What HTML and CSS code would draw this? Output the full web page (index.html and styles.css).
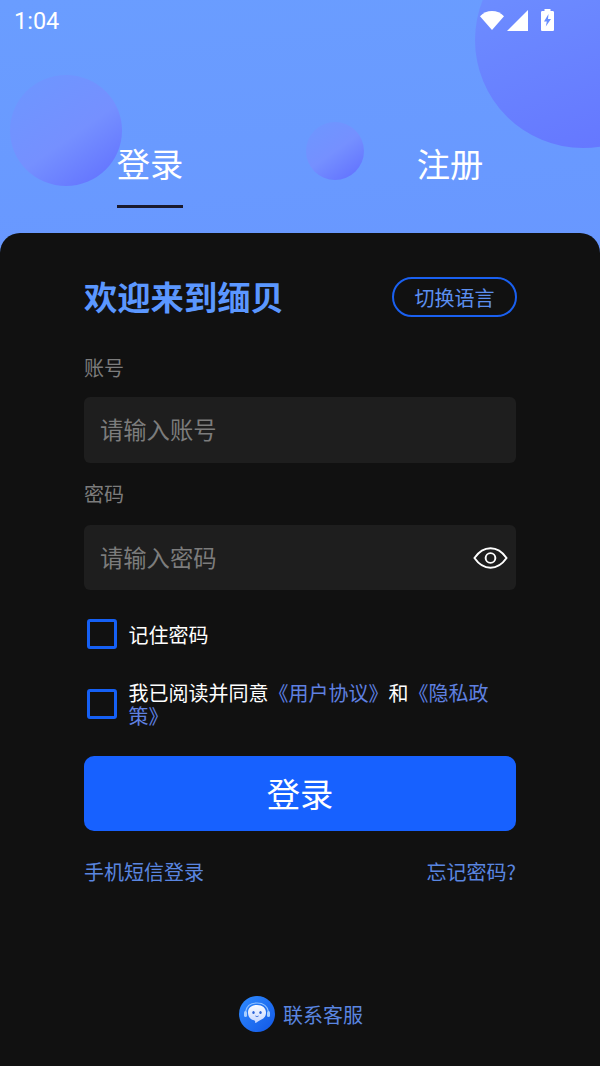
FILE: index.html
```html
<!DOCTYPE html>
<html lang="zh-CN">
<head>
    <meta charset="UTF-8">
    <title>登录</title>
    <link rel="stylesheet" href="styles.css">
</head>
<body>
    <div class="page">
        <div class="hero">
            <div class="bubble bubble-big"></div>
            <div class="bubble bubble-left"></div>
            <div class="bubble bubble-mid"></div>

            <div class="status-bar">
                <span class="time">1:04</span>
                <div class="status-icons">
                    <svg class="icon-wifi" width="24" height="20" viewBox="0 0 24 20">
                        <path d="M0 6.200C3.200 2.800 7.400 1 12 1s8.800 1.800 12 5.200L12 20z" fill="#fff"/>
                    </svg>
                    <svg class="icon-signal" width="21" height="21" viewBox="0 0 21 21">
                        <path d="M0 21L21 0v21z" fill="#fff"/>
                    </svg>
                    <svg class="icon-battery" width="13" height="22" viewBox="0 0 13 22">
                        <path d="M3.500 0h6v2h2.200c.7 0 1.300.6 1.300 1.300v17.400c0 .7-.6 1.300-1.300 1.300H1.300C.6 22 0 21.400 0 20.700V3.300C0 2.600.6 2 1.300 2h2.200z" fill="#fff"/>
                        <path d="M7.500 5L3 12.500h2.800l-1 5L10 10H7z" fill="#6a8fff"/>
                    </svg>
                </div>
            </div>

            <div class="tabs">
                <div class="tab active"><span>登录</span></div>
                <div class="tab"><span>注册</span></div>
            </div>
        </div>

        <div class="sheet">
            <div class="title-row">
                <h1>欢迎来到缅贝</h1>
                <button class="lang-button">切换语言</button>
            </div>

            <label class="field-label" for="account">账号</label>
            <div class="field">
                <input type="text" id="account" placeholder="请输入账号">
            </div>

            <label class="field-label" for="password">密码</label>
            <div class="field">
                <input type="password" id="password" placeholder="请输入密码">
                <svg class="icon-eye" width="35" height="24" viewBox="0 0 36 24" fill="none" stroke="#fff" stroke-width="2">
                    <path d="M1.500 12C6 5.500 11.500 2 18 2s12 3.500 16.500 10C30 18.500 24.500 22 18 22S6 18.500 1.500 12z"/>
                    <circle cx="18" cy="12" r="5"/>
                </svg>
            </div>

            <div class="check-row remember">
                <span class="checkbox"></span>
                <span class="check-text">记住密码</span>
            </div>

            <div class="check-row agree">
                <span class="checkbox"></span>
                <span class="check-text">我已阅读并同意<a href="#">《用户协议》</a>和<a href="#">《隐私政策》</a></span>
            </div>

            <button class="login-button">登录</button>

            <div class="links">
                <a href="#">手机短信登录</a>
                <a href="#">忘记密码?</a>
            </div>

            <div class="support">
                <svg class="support-icon" width="36" height="36" viewBox="0 0 36 36">
                    <defs>
                        <linearGradient id="supportBg" x1="0" y1="0" x2="1" y2="1">
                            <stop offset="0" stop-color="#2f8cff"/>
                            <stop offset="1" stop-color="#1257e6"/>
                        </linearGradient>
                        <linearGradient id="supportFace" x1="0" y1="0" x2="0" y2="1">
                            <stop offset="0" stop-color="#f8faff"/>
                            <stop offset="1" stop-color="#c4d6ff"/>
                        </linearGradient>
                    </defs>
                    <circle cx="18" cy="18" r="18" fill="url(#supportBg)"/>
                    <path d="M6.500 16C7.500 10 12 7 18 7s10.500 3 11.500 9" fill="none" stroke="#8fc0ff" stroke-width="1.200"/>
                    <rect x="5" y="15" width="3" height="6" rx="1.500" fill="#a8cfff"/>
                    <rect x="28" y="15" width="3" height="6" rx="1.500" fill="#a8cfff"/>
                    <path d="M18 9c5.500 0 9 3 9 7.500 0 4-2.500 6.500-5.500 7.500-2 .7-3 2.500-5.500 3 .5-1.500 0-2.200-1-2.700C11 23.500 9 20.500 9 16.500 9 12 12.500 9 18 9z" fill="url(#supportFace)"/>
                    <ellipse cx="14.500" cy="16.500" rx="1.200" ry="1.500" fill="#2a62d8"/>
                    <ellipse cx="21.500" cy="16.500" rx="1.200" ry="1.500" fill="#2a62d8"/>
                    <path d="M16.500 20c1 .7 2 .7 3 0" fill="none" stroke="#2a62d8" stroke-width="1"/>
                </svg>
                <span>联系客服</span>
            </div>
        </div>
    </div>
</body>
</html>
```

FILE: styles.css
```css
* {
    box-sizing: border-box;
}
body {
    margin: 0;
    font-family: "Noto Sans CJK SC", "Noto Sans", sans-serif;
    background: #111;
}
.page {
    display: flex;
    flex-direction: column;
    height: 1066px;
    overflow: hidden;
    background: linear-gradient(175deg, #6a9dff 0%, #6488ff 100%);
}
.hero {
    position: relative;
    height: 233px;
    flex-shrink: 0;
}
.bubble {
    position: absolute;
    border-radius: 50%;
}
.bubble-big {
    left: 475px;
    top: -68px;
    width: 216px;
    height: 216px;
    background: linear-gradient(160deg, #6f94ff 0%, #6474ff 100%);
}
.bubble-left {
    left: 10px;
    top: 75px;
    width: 112px;
    height: 111px;
    background: linear-gradient(145deg, #6f95ff 15%, #7590ff 55%, #5f6dff 100%);
}
.bubble-mid {
    left: 306px;
    top: 122px;
    width: 58px;
    height: 58px;
    background: linear-gradient(145deg, #6f95ff 15%, #7590ff 50%, #5f6dff 100%);
}
.status-bar {
    position: relative;
    display: flex;
    justify-content: space-between;
    align-items: center;
    height: 40px;
    padding: 0 46px 0 14px;
    color: #fff;
}
.time {
    font-family: Roboto, sans-serif;
    font-size: 23.5px;
    margin-top: 2px;
}
.status-icons {
    display: flex;
    align-items: center;
}
.icon-signal {
    margin-left: 3px;
}
.icon-battery {
    margin-left: 13px;
}
.tabs {
    position: relative;
    display: flex;
    margin-top: 93px;
}
.tab {
    flex: 1;
    display: flex;
    justify-content: center;
    color: #fff;
    font-size: 33.3px;
    line-height: 60px;
}
.tab span {
    display: block;
    height: 75px;
}
.tab.active span {
    border-bottom: 3px solid #1a1a2e;
}
.sheet {
    flex: 1;
    display: flex;
    flex-direction: column;
    padding: 44px 84px 0;
    background: #111;
    border-radius: 20px 20px 0 0;
}
.title-row {
    display: flex;
    justify-content: space-between;
    align-items: center;
    height: 40px;
}
h1 {
    margin: 0 0 4px;
    font-size: 33.3px;
    font-weight: 700;
    color: #5b97ff;
}
.lang-button {
    width: 125px;
    height: 40px;
    margin-right: -1px;
    padding: 0;
    font-family: inherit;
    font-size: 20px;
    color: #5c8ff0;
    background: none;
    border: 2px solid #1a60f0;
    border-radius: 20px;
}
.field-label {
    display: block;
    margin-top: 36px;
    font-size: 20px;
    line-height: 29px;
    color: #7c7c7c;
}
.field {
    position: relative;
    height: 66px;
    margin-top: 15px;
    background: #1e1e1e;
    border-radius: 6px;
}
.field + .field-label {
    margin-top: 16px;
}
.field-label + .field + .field-label + .field {
    margin-top: 17px;
    height: 65px;
}
.field input {
    width: 100%;
    height: 100%;
    padding: 0 16px 2px;
    font-family: inherit;
    font-size: 23.3px;
    color: #fff;
    background: none;
    border: none;
    outline: none;
}
.field input::placeholder {
    color: #7c7c7c;
}
.icon-eye {
    position: absolute;
    right: 8px;
    top: 21px;
}
.check-row {
    display: flex;
    align-items: center;
    font-size: 20px;
    color: #fff;
}
.remember {
    margin-top: 29px;
}
.agree {
    margin-top: 32px;
}
.checkbox {
    flex-shrink: 0;
    width: 30px;
    height: 30px;
    margin: 0 12px 0 3px;
    border: 3.5px solid #1560f5;
    border-radius: 3px;
}
.check-text {
    margin-left: -0.5px;
    line-height: 23px;
}
.check-text a {
    color: #5f80e0;
    text-decoration: none;
}
.login-button {
    height: 75px;
    margin-top: 29px;
    padding: 0 0 3px;
    font-family: inherit;
    font-size: 33.3px;
    color: #fff;
    background: #1761ff;
    border: none;
    border-radius: 10px;
}
.links {
    display: flex;
    justify-content: space-between;
    margin-top: 26px;
    font-size: 20px;
    line-height: 29px;
}
.links a {
    color: #5a86e0;
    text-decoration: none;
}
.support {
    display: flex;
    justify-content: center;
    align-items: center;
    gap: 8px;
    margin-top: 110px;
    padding-left: 2px;
    font-size: 20px;
    color: #5a86e0;
}
```
